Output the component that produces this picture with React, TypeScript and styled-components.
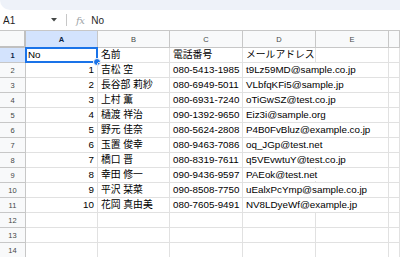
import React from "react";
import styled, { createGlobalStyle } from "styled-components";

const Global = createGlobalStyle`
  html, body { margin: 0; padding: 0; background: #fff; }
  body { font-family: "Liberation Sans", Arial, "Noto Sans CJK JP", sans-serif; overflow: hidden; }
`;

const Page = styled.div`
  width: 400px;
  height: 257px;
  overflow: hidden;
  background: #fff;
`;

const TopBand = styled.div`
  height: 10px;
  background: #eef2f9;
  border-bottom-left-radius: 10px;
`;

const FormulaBar = styled.div`
  height: 20px;
  display: flex;
  align-items: center;
  border-bottom: 1px solid #c7c7c7;
  font-size: 10px;
  color: #1f1f1f;
`;

const NameBox = styled.div`
  width: 66px;
  display: flex;
  align-items: center;
  justify-content: space-between;
  padding: 0 9px 0 3px;
  box-sizing: border-box;
`;

const Separator = styled.div`
  width: 1px;
  height: 12px;
  background: #c7c7c7;
`;

const Fx = styled.span`
  font-family: "DejaVu Serif", "Liberation Serif", serif;
  font-style: italic;
  color: #a0a4a8;
  font-size: 10px;
  margin: 0 7px 0 9px;
  letter-spacing: -0.5px;
`;

const Grid = styled.div`
  display: grid;
  grid-template-columns: 26px 72px 72px 73px 73px 73px 11px;
  grid-template-rows: 17px repeat(14, 15px);
`;

const Corner = styled.div`
  background: #f8f9fa;
  border-right: 2px solid #c0c0c0;
  border-bottom: 2px solid #c0c0c0;
  box-sizing: border-box;
`;

const ColHead = styled.div<{ $active?: boolean }>`
  background: ${(p) => (p.$active ? "#d3e3fd" : "#f8f9fa")};
  border-right: 1px solid #c7c7c7;
  border-bottom: 1px solid #c7c7c7;
  box-sizing: border-box;
  display: flex;
  align-items: center;
  justify-content: center;
  font-size: 7.5px;
  color: ${(p) => (p.$active ? "#0b1f44" : "#444746")};
  font-weight: ${(p) => (p.$active ? 700 : 400)};
`;

const RowHead = styled.div<{ $active?: boolean }>`
  background: ${(p) => (p.$active ? "#d3e3fd" : "#f8f9fa")};
  border-right: 1px solid #c7c7c7;
  border-bottom: 1px solid #c7c7c7;
  box-sizing: border-box;
  display: flex;
  align-items: center;
  justify-content: center;
  font-size: 7.5px;
  color: ${(p) => (p.$active ? "#0b1f44" : "#444746")};
  font-weight: ${(p) => (p.$active ? 700 : 400)};
`;

const Cell = styled.div<{ $align?: "left" | "right"; $noRight?: boolean }>`
  border-right: ${(p) => (p.$noRight ? "none" : "1px solid #e1e1e1")};
  border-bottom: 1px solid #e1e1e1;
  box-sizing: border-box;
  display: flex;
  align-items: flex-end;
  justify-content: ${(p) => (p.$align === "right" ? "flex-end" : "flex-start")};
  padding: 0 3px 1px 3px;
  font-size: 9.8px;
  line-height: 12px;
  color: #000;
  white-space: nowrap;
  min-width: 0;
  position: relative;
`;

const CellText = styled.span`
  background: #fff;
`;

const Selected = styled.div`
  border: 2px solid #1a73e8;
  box-sizing: border-box;
  display: flex;
  align-items: flex-end;
  padding: 0 2px 0 1px;
  font-size: 9.8px;
  line-height: 12px;
  position: relative;
  margin: -1px 0 0 -1px;
`;

const Handle = styled.div`
  position: absolute;
  right: -5px;
  bottom: -5px;
  width: 6px;
  height: 6px;
  border-radius: 50%;
  background: #1a73e8;
  border: 1px solid #fff;
`;

const data: [number, string, string, string][] = [
  [1, "吉松 空", "080-5413-1985", "t9Lz59MD@sample.co.jp"],
  [2, "長谷部 莉紗", "080-6949-5011", "VLbfqKFi5@sample.jp"],
  [3, "上村 薫", "080-6931-7240", "oTiGwSZ@test.co.jp"],
  [4, "樋渡 祥治", "090-1392-9650", "Eiz3i@sample.org"],
  [5, "野元 佳奈", "080-5624-2808", "P4B0FvBluz@example.co.jp"],
  [6, "玉置 俊幸", "080-9463-7086", "oq_JGp@test.net"],
  [7, "橋口 晋", "080-8319-7611", "q5VEvwtuY@test.co.jp"],
  [8, "幸田 修一", "090-9436-9597", "PAEok@test.net"],
  [9, "平沢 栞菜", "090-8508-7750", "uEalxPcYmp@sample.co.jp"],
  [10, "花岡 真由美", "080-7605-9491", "NV8LDyeWf@example.jp"],
];

const cols = ["A", "B", "C", "D", "E", ""];

export default function App() {
  return (
    <Page>
      <Global />
      <TopBand />
      <FormulaBar>
        <NameBox>
          <span>A1</span>
          <svg width="6" height="4" viewBox="0 0 6 4">
            <path d="M0 0 L6 0 L3 3.5 Z" fill="#444746" />
          </svg>
        </NameBox>
        <Separator />
        <Fx>fx</Fx>
        <span>No</span>
      </FormulaBar>
      <Grid>
        <Corner />
        {cols.map((c, i) => (
          <ColHead key={i} $active={c === "A"}>{c}</ColHead>
        ))}
        <RowHead $active>1</RowHead>
        <Selected>
          No
          <Handle />
        </Selected>
        <Cell>名前</Cell>
        <Cell>電話番号</Cell>
        <Cell>メールアドレス</Cell>
        <Cell />
        <Cell />
        {data.map(([n, name, tel, mail], r) => (
          <React.Fragment key={n}>
            <RowHead>{r + 2}</RowHead>
            <Cell $align="right">{n}</Cell>
            <Cell>{name}</Cell>
            <Cell>{tel}</Cell>
            <Cell $noRight={mail.length > 14}>
              <CellText>{mail}</CellText>
            </Cell>
            <Cell />
            <Cell />
          </React.Fragment>
        ))}
        {[12, 13, 14].map((r) => (
          <React.Fragment key={r}>
            <RowHead>{r}</RowHead>
            <Cell />
            <Cell />
            <Cell />
            <Cell />
            <Cell />
            <Cell />
          </React.Fragment>
        ))}
      </Grid>
    </Page>
  );
}
